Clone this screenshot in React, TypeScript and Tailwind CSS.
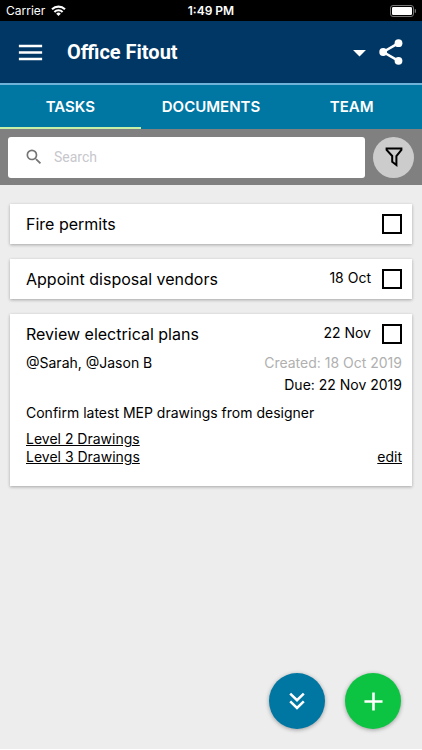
import { useState } from 'react'
import { MdAdd, MdArrowDropDown, MdMenu, MdSearch } from 'react-icons/md'

type Task = {
  id: string
  title: string
  due?: string
  details?: {
    people: string
    created: string
    due: string
    note: string
    links: string[]
  }
}

const tabs = ['TASKS', 'DOCUMENTS', 'TEAM']

const tasks: Task[] = [
  { id: 'permits', title: 'Fire permits' },
  { id: 'disposal', title: 'Appoint disposal vendors', due: '18 Oct' },
  {
    id: 'electrical',
    title: 'Review electrical plans',
    due: '22 Nov',
    details: {
      people: '@Sarah, @Jason B',
      created: 'Created: 18 Oct 2019',
      due: 'Due: 22 Nov 2019',
      note: 'Confirm latest MEP drawings from designer',
      links: ['Level 2 Drawings', 'Level 3 Drawings'],
    },
  },
]

function StatusBar() {
  return (
    <div className="grid h-[21px] grid-cols-3 items-center bg-black px-[6px] text-[12px] text-white">
      <div className="flex items-center gap-[6px]">
        <span>Carrier</span>
        <svg viewBox="0 0 15 11" className="h-[11px] w-[15px]" fill="none" stroke="currentColor" strokeWidth="2.1">
          <path d="M1 4.2a9.4 9.4 0 0 1 13 0" />
          <path d="M3.4 6.9a5.9 5.9 0 0 1 8.2 0" />
          <path d="M7.5 11 5.2 8.7a3.3 3.3 0 0 1 4.6 0z" fill="currentColor" stroke="none" />
        </svg>
      </div>
      <span className="text-center font-semibold">1:49 PM</span>
      <svg viewBox="0 0 26 12" className="h-3 w-[26px] justify-self-end" fill="none">
        <rect x="0.5" y="0.5" width="23" height="11" rx="2.5" stroke="#777" />
        <rect x="2" y="2" width="20" height="8" rx="1.2" fill="#fff" />
        <path d="M25 4.2a2 2 0 0 1 0 3.6z" fill="#777" stroke="#777" strokeWidth="0.6" />
      </svg>
    </div>
  )
}

function ShareIcon() {
  return (
    <svg viewBox="0 0 24 26" className="h-[26px] w-6" fill="currentColor">
      <path d="M19.5 4.2 4.2 13l15.3 8.8" fill="none" stroke="currentColor" strokeWidth="2.5" />
      <circle cx="19.5" cy="4.2" r="3.9" />
      <circle cx="4.2" cy="13" r="3.9" />
      <circle cx="19.5" cy="21.8" r="3.9" />
    </svg>
  )
}

function TaskCard({ task }: { task: Task }) {
  const { details } = task

  return (
    <li className="bg-white pr-[10px] pl-4 shadow-[0_1px_3px_rgba(0,0,0,0.3)]">
      <div className="flex h-10 items-center">
        <label htmlFor={task.id} className="flex-1 text-[16px]">
          {task.title}
        </label>
        {task.due && <span className="mr-[11px] pb-1 text-[14px]">{task.due}</span>}
        <input
          id={task.id}
          type="checkbox"
          className="size-5 appearance-none border-2 border-black bg-white checked:bg-black"
        />
      </div>

      {details && (
        <div className="pb-5 text-[14px] leading-[18px]">
          <div className="flex justify-between">
            <span>{details.people}</span>
            <span className="text-[#b0b0b0]">{details.created}</span>
          </div>
          <p className="mt-1 text-right">{details.due}</p>
          <p className="mt-[10px]">{details.note}</p>
          <div className="mt-2 flex items-end justify-between">
            <div className="flex flex-col">
              {details.links.map((link) => (
                <a key={link} href="#" className="underline">
                  {link}
                </a>
              ))}
            </div>
            <a href="#" className="underline">
              edit
            </a>
          </div>
        </div>
      )}
    </li>
  )
}

export default function App() {
  const [activeTab, setActiveTab] = useState('TASKS')

  return (
    <div className="flex min-h-screen flex-col border-b border-white bg-[#ededed] font-['Inter','Liberation_Sans',sans-serif] text-black">
      <StatusBar />

      {/* HEADER */}
      <header className="flex h-16 items-center border-b-2 border-[#6fb4d8] bg-[#003764] px-[15px] text-white">
        <button aria-label="Menu">
          <MdMenu className="size-[31px]" />
        </button>
        <h1 className="ml-[21px] flex-1 font-['Roboto',sans-serif] text-[20px] font-bold">Office Fitout</h1>
        <button aria-label="Switch project">
          <MdArrowDropDown className="size-[31px]" />
        </button>
        <button aria-label="Share" className="px-1">
          <ShareIcon />
        </button>
      </header>

      {/* TABS */}
      <nav className="grid h-11 grid-cols-3 bg-[#0077a3]">
        {tabs.map((tab) => (
          <button
            key={tab}
            onClick={() => setActiveTab(tab)}
            className={`border-b-2 pt-0.5 text-[15px] font-semibold text-white ${
              tab === activeTab ? 'border-[#c5f0a8]' : 'border-transparent'
            }`}
          >
            {tab}
          </button>
        ))}
      </nav>

      {/* SEARCH */}
      <div className="flex h-14 items-center gap-2 bg-[#808080] px-2">
        <label className="flex h-[41px] flex-1 items-center gap-[10px] rounded-[3px] bg-white px-4">
          <MdSearch className="size-5 shrink-0 text-[#757575]" />
          <input
            type="text"
            placeholder="Search"
            aria-label="Search"
            className="w-full font-['Roboto',sans-serif] text-[14px] outline-none placeholder:text-[#c7c7cd]"
          />
        </label>
        <button aria-label="Filter" className="flex size-[41px] items-center justify-center rounded-full bg-[#cccccc]">
          <svg viewBox="0 0 18 20" className="h-5 w-[18px]" fill="none" stroke="#000" strokeWidth="2">
            <path d="M1.6 1.6h14.8v1.2l-5 6.2v9l-4.2-3.2V9l-5.6-6.2z" />
          </svg>
        </button>
      </div>

      {/* TASK LIST */}
      <ul className="flex flex-col gap-[15px] px-[10px] pt-[19px]">
        {tasks.map((task) => (
          <TaskCard key={task.id} task={task} />
        ))}
      </ul>

      {/* ACTIONS */}
      <div className="mt-auto flex justify-end gap-5 pr-[21px] pb-5">
        <button
          aria-label="Expand all"
          className="flex size-14 items-center justify-center rounded-full bg-[#0077a3] text-white shadow-[0_1px_4px_rgba(0,0,0,0.35)]"
        >
          <svg viewBox="0 0 16 18" className="h-[18px] w-4" fill="none" stroke="currentColor" strokeWidth="2.5">
            <path d="m1.2 1.6 6.8 6.6 6.8-6.6" />
            <path d="m1.2 9.4 6.8 6.6 6.8-6.6" />
          </svg>
        </button>
        <button
          aria-label="Add task"
          className="flex size-14 items-center justify-center rounded-full bg-[#0cc442] text-white shadow-[0_1px_4px_rgba(0,0,0,0.35)]"
        >
          <MdAdd className="size-[31px]" />
        </button>
      </div>
    </div>
  )
}
